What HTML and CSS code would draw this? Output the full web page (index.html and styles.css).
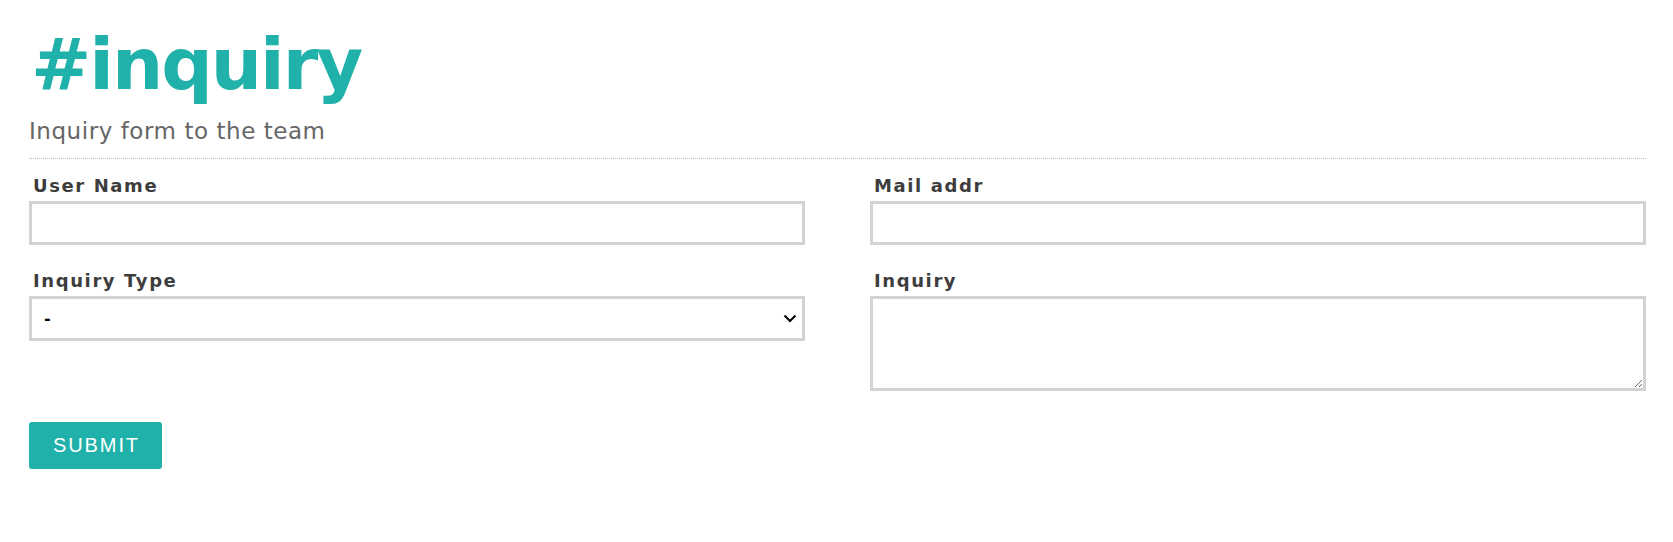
FILE: index.html
```html
<!DOCTYPE html>
<html lang="en">
<head>
<meta charset="utf-8">
<title>#inquiry</title>
<link rel="stylesheet" href="styles.css">
</head>
<body>
<main class="page">
  <header class="head">
    <h1 class="title">#inquiry</h1>
    <p class="subtitle">Inquiry form to the team</p>
  </header>
  <form class="form">
    <div class="grid">
      <div class="field">
        <label class="label" for="uname">User Name</label>
        <input class="control" id="uname" type="text">
      </div>
      <div class="field">
        <label class="label" for="mail">Mail addr</label>
        <input class="control" id="mail" type="email">
      </div>
      <div class="field">
        <label class="label" for="type">Inquiry Type</label>
        <div class="select-wrap">
          <select class="control select" id="type">
            <option>-</option>
          </select>
          <svg class="chevron" width="14" height="9" viewBox="0 0 14 9" aria-hidden="true">
            <path d="M1.5 1.5 L7 7 L12.5 1.5" fill="none" stroke="#000" stroke-width="2"/>
          </svg>
        </div>
      </div>
      <div class="field">
        <label class="label" for="body">Inquiry</label>
        <textarea class="control area" id="body"></textarea>
      </div>
    </div>
    <button class="submit" type="button">SUBMIT</button>
  </form>
</main>
</body>
</html>
```
FILE: styles.css
```css
* { box-sizing: border-box; }
html, body { margin: 0; padding: 0; background: #fff; }
body { font-family: "DejaVu Sans", Verdana, sans-serif; }
.page { padding: 28px 27px 0 29px; }
.head { border-bottom: 1px dotted #b8b8b8; padding-bottom: 15px; }
.title {
  margin: 0;
  font-size: 72px;
  line-height: 72px;
  font-weight: bold;
  color: #20b2aa;
  letter-spacing: -2px;
  padding-left: 2px;
}
.subtitle {
  margin: 20px 0 0;
  font-size: 23px;
  line-height: 23px;
  color: #666;
  letter-spacing: 0.55px;
}
.form { padding-top: 18px; }
.grid {
  display: grid;
  grid-template-columns: 1fr 1fr;
  column-gap: 65px;
  row-gap: 27px;
}
.field { display: flex; flex-direction: column; gap: 6px; }
.label {
  font-size: 18px;
  line-height: 18px;
  font-weight: bold;
  color: #3d3d3d;
  letter-spacing: 1.6px;
  padding-left: 4px;
}
.control {
  display: block;
  width: 100%;
  height: 44px;
  border: 3px solid #d3d3d3;
  border-radius: 0;
  background: #fff;
  font-family: "DejaVu Sans", Verdana, sans-serif;
  font-size: 16px;
  color: #000;
  margin: 0;
  outline: none;
}
.select-wrap { position: relative; }
.select {
  -webkit-appearance: none;
  appearance: none;
  height: 45px;
  padding: 0 30px 0 12px;
  font-weight: bold;
}
.chevron {
  position: absolute;
  right: 8px;
  top: 18px;
  pointer-events: none;
}
.area { height: 95px; resize: vertical; }
.submit {
  margin-top: 31px;
  height: 47px;
  padding: 0 22px 0 24px;
  border: none;
  border-radius: 3px;
  background: #20b2aa;
  color: #fff;
  font-family: "Liberation Sans", Arial, sans-serif;
  font-size: 20px;
  letter-spacing: 1.9px;
}
```
